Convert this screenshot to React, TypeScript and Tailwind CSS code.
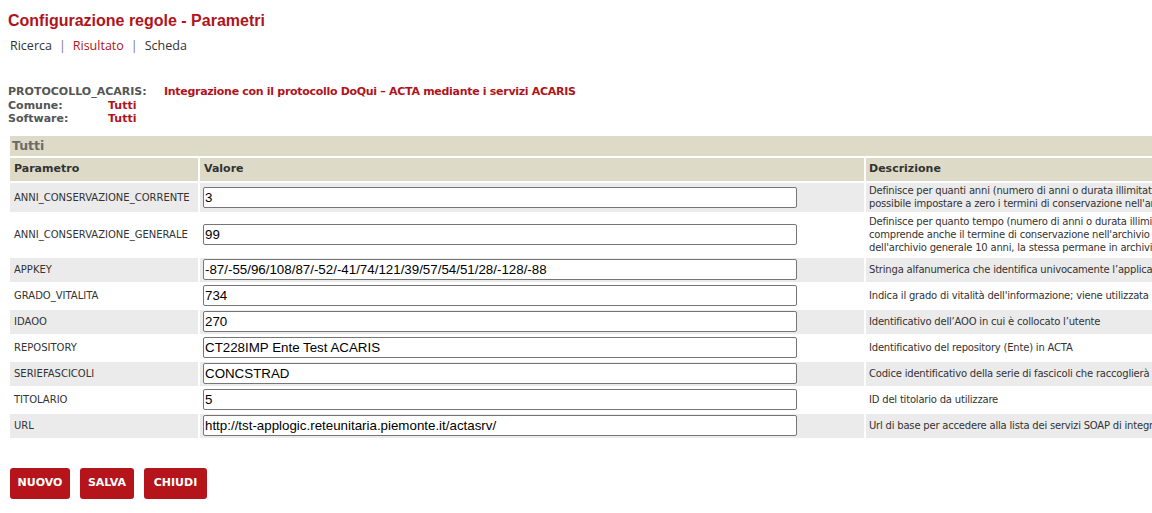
const FONT = "font-['DejaVu_Sans',Verdana,sans-serif]";

interface ParamRow {
  name: string;
  value: string;
  desc: string[];
}

const rows: ParamRow[] = [
  {
    name: "ANNI_CONSERVAZIONE_CORRENTE",
    value: "3",
    desc: [
      "Definisce per quanti anni (numero di anni o durata illimitata) un fascicolo resta nell'archivio corrente. È",
      "possibile impostare a zero i termini di conservazione nell'archivio corrente.",
    ],
  },
  {
    name: "ANNI_CONSERVAZIONE_GENERALE",
    value: "99",
    desc: [
      "Definisce per quanto tempo (numero di anni o durata illimitata) un fascicolo resta in archivio. Il valore",
      "comprende anche il termine di conservazione nell'archivio corrente: se l'archivio corrente è di 5 anni e quello",
      "dell'archivio generale 10 anni, la stessa permane in archivio di deposito per 5 anni.",
    ],
  },
  {
    name: "APPKEY",
    value: "-87/-55/96/108/87/-52/-41/74/121/39/57/54/51/28/-128/-88",
    desc: ["Stringa alfanumerica che identifica univocamente l’applicativo nei confronti di ACTA"],
  },
  {
    name: "GRADO_VITALITA",
    value: "734",
    desc: ["Indica il grado di vitalità dell'informazione; viene utilizzata per la classificazione dei documenti"],
  },
  {
    name: "IDAOO",
    value: "270",
    desc: ["Identificativo dell’AOO in cui è collocato l’utente"],
  },
  {
    name: "REPOSITORY",
    value: "CT228IMP Ente Test ACARIS",
    desc: ["Identificativo del repository (Ente) in ACTA"],
  },
  {
    name: "SERIEFASCICOLI",
    value: "CONCSTRAD",
    desc: ["Codice identificativo della serie di fascicoli che raccoglierà tutti i fascicoli creati"],
  },
  {
    name: "TITOLARIO",
    value: "5",
    desc: ["ID del titolario da utilizzare"],
  },
  {
    name: "URL",
    value: "http://tst-applogic.reteunitaria.piemonte.it/actasrv/",
    desc: ["Url di base per accedere alla lista dei servizi SOAP di integrazione con ACTA"],
  },
];

export default function App() {
  return (
    <div className="w-full min-h-screen bg-white overflow-hidden">
      <div className="px-[8px]">
        {/* Titolo */}
        <h1 className="pt-[12px] text-[16px] leading-[18px] font-bold text-[#b0141b] font-['Liberation_Sans',Arial,sans-serif]">
          Configurazione regole - Parametri
        </h1>

        {/* Navigazione */}
        <div className="mt-[7px] pl-[2px] text-[12.5px] leading-[18px] text-[#333] font-['Open_Sans',sans-serif]">
          <span>Ricerca</span>
          <span className="mx-[7px] text-[#777]">|</span>
          <span className="text-[#b0141b]">Risultato</span>
          <span className="mx-[7px] text-[#777]">|</span>
          <span>Scheda</span>
        </div>

        {/* Riepilogo */}
        <div className={`mt-[30px] text-[11px] leading-[13.5px] font-bold ${FONT}`}>
          <div className="flex">
            <span className="w-[156px] text-[#555]">PROTOCOLLO_ACARIS:</span>
            <span className="text-[#b0141b] tracking-[-0.3px]">
              Integrazione con il protocollo DoQui – ACTA mediante i servizi ACARIS
            </span>
          </div>
          <div className="flex">
            <span className="w-[100px] text-[#555]">Comune:</span>
            <span className="text-[#b0141b]">Tutti</span>
          </div>
          <div className="flex">
            <span className="w-[100px] text-[#555]">Software:</span>
            <span className="text-[#b0141b]">Tutti</span>
          </div>
        </div>
      </div>

      {/* Tabella parametri */}
      <div className="mt-[8px] pl-[8px]">
        <table className={`w-[1400px] table-fixed border-separate border-spacing-[2px] ${FONT}`}>
          <colgroup>
            <col className="w-[188px]" />
            <col className="w-[664px]" />
            <col />
          </colgroup>
          <thead>
            <tr>
              <th
                colSpan={3}
                className="h-[20px] bg-[#dddac8] px-[2px] text-left text-[12.5px] leading-[20px] font-bold text-[#6b6b6b]"
              >
                Tutti
              </th>
            </tr>
            <tr className="bg-[#dddac8] text-left text-[11px] font-bold text-[#333]">
              <th className="h-[23px] px-[4px]">Parametro</th>
              <th className="h-[23px] px-[4px]">Valore</th>
              <th className="h-[23px] px-[3px]">Descrizione</th>
            </tr>
          </thead>
          <tbody>
            {rows.map((r, i) => (
              <tr key={r.name} className={i % 2 === 0 ? "bg-[#ebebeb]" : "bg-white"}>
                <td className="h-[24px] px-[4px] text-[10px] text-[#333] whitespace-nowrap">{r.name}</td>
                <td className="h-[24px] px-[3px]">
                  <input
                    readOnly
                    value={r.value}
                    className="block w-[594px] h-[21px] border border-[#767676] rounded-[2px] bg-white px-[1px] text-[13.33px] text-black font-['Liberation_Sans',Arial,sans-serif] outline-none"
                  />
                </td>
                <td className="py-[1.5px] px-[3px] text-[10px] leading-[13px] text-[#333] whitespace-nowrap tracking-[-0.2px]">
                  {r.desc.map((line) => (
                    <div key={line}>{line}</div>
                  ))}
                </td>
              </tr>
            ))}
          </tbody>
        </table>
      </div>

      {/* Pulsanti */}
      <div className={`mt-[28px] px-[10px] flex gap-[10px] ${FONT}`}>
        <button className="w-[60px] h-[31px] rounded-[3px] bg-[#b5141b] text-white text-[11px] font-bold">
          NUOVO
        </button>
        <button className="w-[54px] h-[31px] rounded-[3px] bg-[#b5141b] text-white text-[11px] font-bold">
          SALVA
        </button>
        <button className="w-[63px] h-[31px] rounded-[3px] bg-[#b5141b] text-white text-[11px] font-bold">
          CHIUDI
        </button>
      </div>
    </div>
  );
}
